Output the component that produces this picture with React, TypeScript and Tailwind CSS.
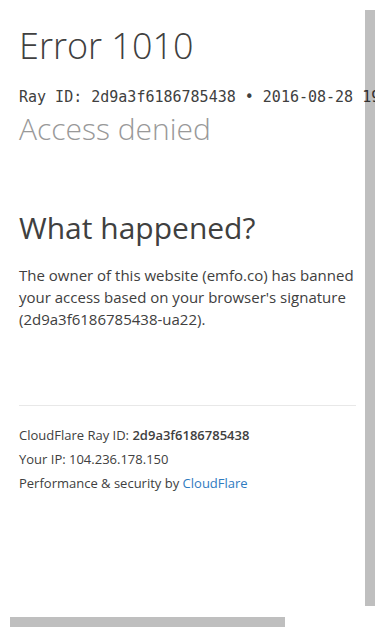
export default function App() {
  return (
    <div className="relative h-[627px] w-[375px] overflow-hidden bg-white font-['Open_Sans',_'Helvetica_Neue',_Arial,_sans-serif] text-[#404040]">
      <main className="px-[19px] pt-[24px]">
        <header>
          <h1 className="whitespace-nowrap text-[36px] font-light leading-[44px]">Error 1010</h1>
          <p className="mt-[19px] whitespace-nowrap font-['DejaVu_Sans_Mono',_monospace] text-[15px] leading-[20px]">
            Ray ID: 2d9a3f6186785438 &bull; 2016-08-28 19:42:13 UTC
          </p>
          <h2 className="mt-[4px] whitespace-nowrap text-[30px] font-light leading-[36px] text-[#999]">
            Access denied
          </h2>
        </header>

        <section className="mt-[63px] w-[337px]">
          <h2 className="text-[30px] font-normal leading-[36px]">What happened?</h2>
          <p className="mt-[18px] text-[15px] leading-[22px]">
            The owner of this website (emfo.co) has banned your access based on your browser's signature (2d9a3f6186785438-ua22).
          </p>
        </section>

        <footer className="mt-[75px] w-[337px] border-t border-[#e8e8e8] pt-[17px] text-[13px] leading-[24px]">
          <p>
            CloudFlare Ray ID: <strong className="font-semibold">2d9a3f6186785438</strong>
          </p>
          <p>Your IP: 104.236.178.150</p>
          <p>
            Performance &amp; security by <a className="text-[#2f7bbf]" href="#">CloudFlare</a>
          </p>
        </footer>
      </main>

      {/* overlay scroll indicators */}
      <div className="absolute right-0 top-[10px] h-[596px] w-[10px] bg-black/25" />
      <div className="absolute bottom-0 left-[10px] h-[10px] w-[275px] bg-black/25" />
    </div>
  );
}
